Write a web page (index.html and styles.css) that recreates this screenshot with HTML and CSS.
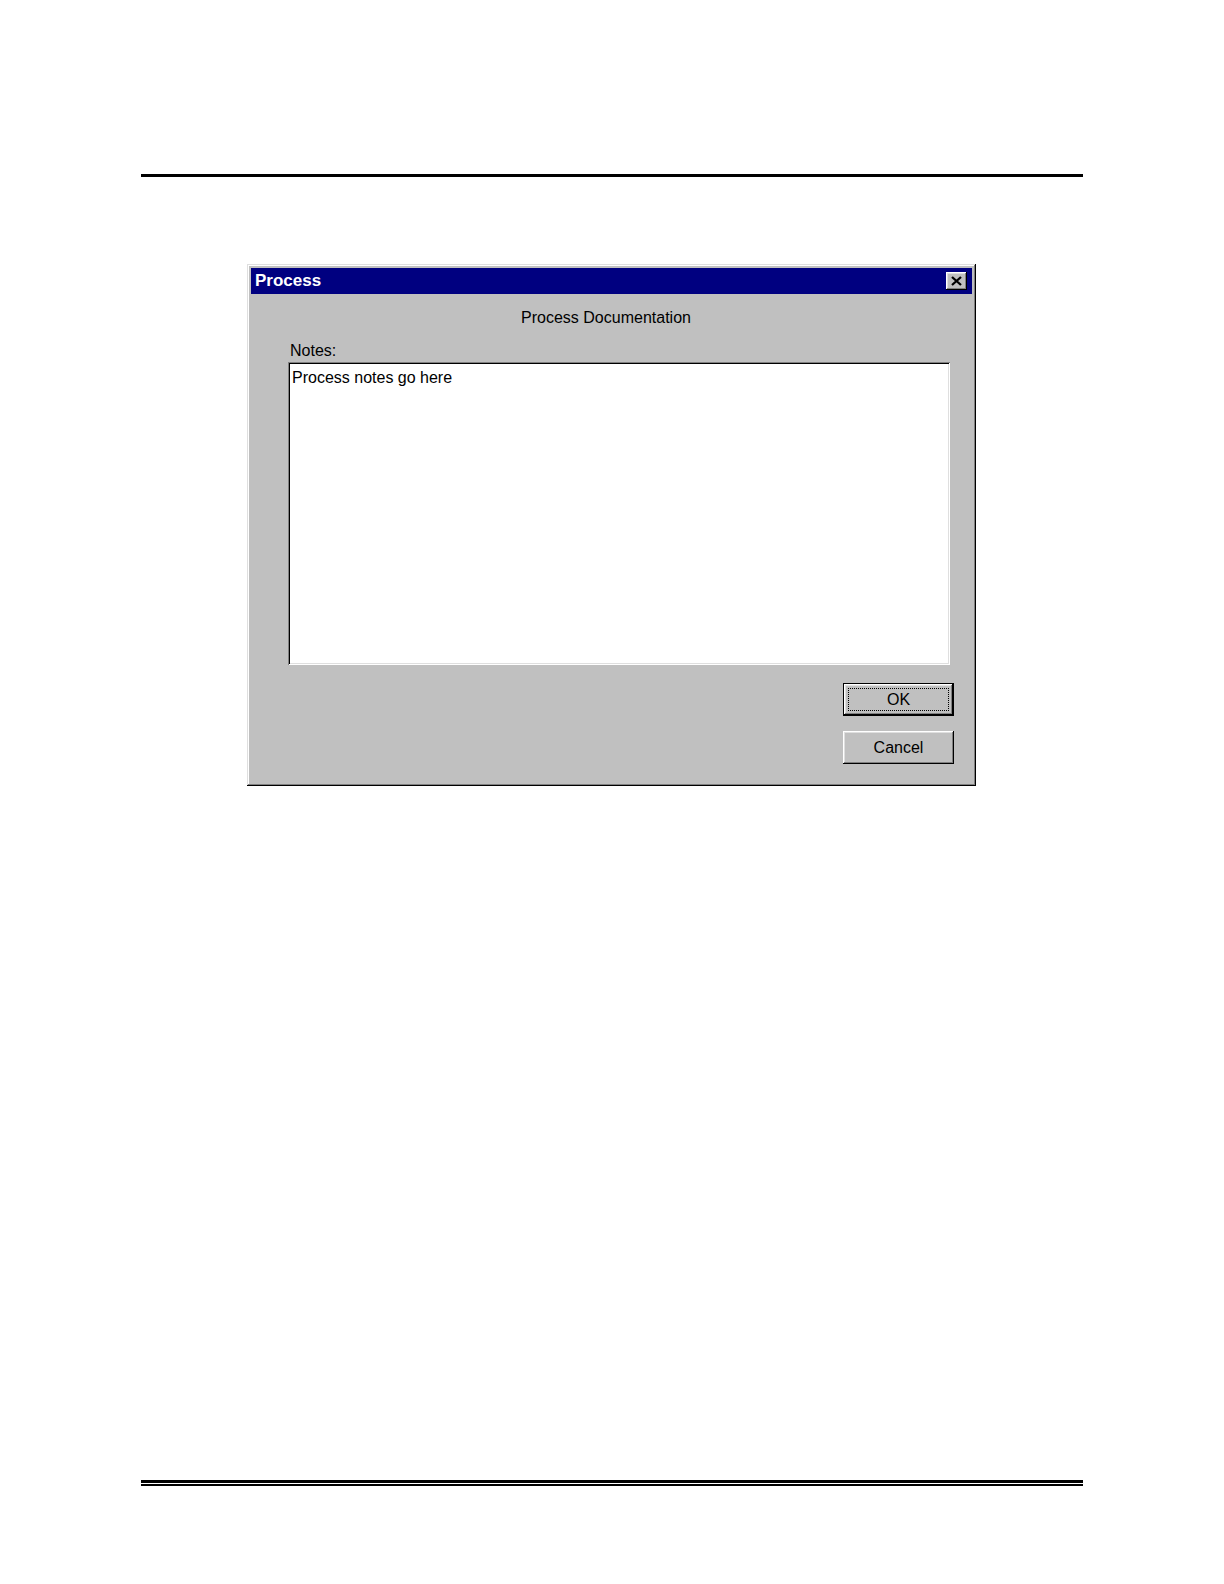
FILE: index.html
```html
<!DOCTYPE html>
<html>
<head>
<meta charset="utf-8">
<title>Process</title>
<link rel="stylesheet" href="styles.css">
</head>
<body>
<div class="page">
  <div class="rule-top"></div>
  <div class="dialog">
    <div class="titlebar">
      <span class="title">Process</span>
      <span class="close-btn">
        <svg width="11" height="10" viewBox="0 0 11 10"><path d="M1 1 L10 9 M10 1 L1 9" stroke="#000" stroke-width="2.3" fill="none"/></svg>
      </span>
    </div>
    <div class="content">
      <div class="heading">Process Documentation</div>
      <div class="label">Notes:</div>
      <div class="notes-box">Process notes go here</div>
      <div class="buttons">
        <div class="btn btn-default"><span class="focus">OK</span></div>
        <div class="btn">Cancel</div>
      </div>
    </div>
  </div>
  <div class="rule-bottom"></div>
</div>
</body>
</html>
```

FILE: styles.css
```css
html, body {
  margin: 0;
  padding: 0;
  background: #fff;
}
.page {
  padding: 174px 141px 0 141px;
  font-family: "Liberation Sans", Arial, sans-serif;
  color: #000;
}
.rule-top {
  height: 3px;
  background: #000;
}
.dialog {
  margin-top: 87px;
  margin-left: 106px;
  width: 729px;
  box-sizing: border-box;
  padding: 4px;
  background: #c0c0c0;
  box-shadow: inset -1px -1px #000, inset 1px 1px #dfdfdf, inset -2px -2px #808080, inset 2px 2px #fff;
}
.titlebar {
  height: 26px;
  background: #000080;
  display: flex;
  align-items: center;
  justify-content: space-between;
  padding: 0 5px 0 4px;
}
.title {
  color: #fff;
  font-weight: bold;
  font-size: 17px;
  line-height: 26px;
}
.close-btn {
  width: 21px;
  height: 18px;
  box-sizing: border-box;
  background: #c0c0c0;
  display: flex;
  align-items: center;
  justify-content: center;
  box-shadow: inset -1px -1px #000, inset 1px 1px #fff, inset -2px -2px #808080, inset 2px 2px #dfdfdf;
}
.close-btn svg {
  display: block;
  margin-left: -1px;
}
.content {
  display: flex;
  flex-direction: column;
  padding: 15px 18px 18px 37px;
  font-size: 16px;
}
.heading {
  line-height: 18px;
  height: 18px;
  text-align: center;
  padding-right: 30px;
}
.label {
  margin-top: 15px;
  line-height: 18px;
  height: 18px;
  padding-left: 2px;
}
.notes-box {
  margin-top: 2px;
  width: 662px;
  height: 303px;
  box-sizing: border-box;
  background: #fff;
  padding: 7px 4px;
  line-height: 18px;
  box-shadow: inset 1px 1px #808080, inset -1px -1px #fff, inset 2px 2px #000, inset -2px -2px #dfdfdf;
}
.buttons {
  margin-top: 18px;
  display: flex;
  flex-direction: column;
  align-items: flex-end;
  gap: 15px;
}
.btn {
  width: 111px;
  height: 33px;
  box-sizing: border-box;
  display: flex;
  align-items: center;
  justify-content: center;
  line-height: 18px;
  background: #c0c0c0;
  box-shadow: inset -1px -1px #000, inset 1px 1px #fff, inset -2px -2px #808080, inset 2px 2px #dfdfdf;
}
.btn-default {
  border: 1px solid #000;
  padding: 4px;
}
.focus {
  flex: 1;
  align-self: stretch;
  display: flex;
  align-items: center;
  justify-content: center;
  border: 1px dotted #000;
}
.rule-bottom {
  margin-top: 694px;
  height: 1px;
  border-top: 3px solid #000;
  border-bottom: 2px solid #000;
}
```
